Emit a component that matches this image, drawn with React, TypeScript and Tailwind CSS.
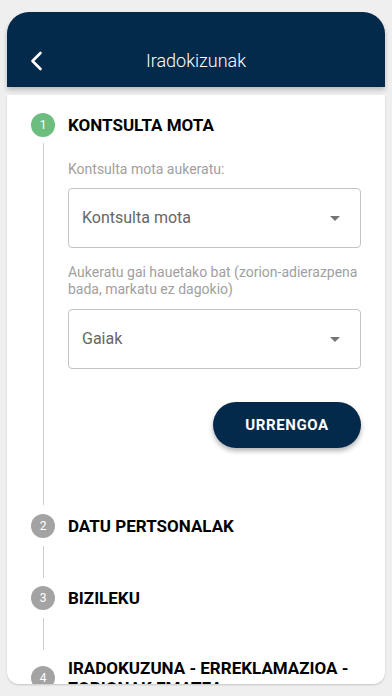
import React from "react";

const font = { fontFamily: "Roboto, 'Liberation Sans', sans-serif" };

function StepCircle({ n, active }: { n: number; active?: boolean }) {
  return (
    <div
      className={`w-6 h-6 rounded-full flex items-center justify-center text-white text-[12px] shrink-0 ${
        active ? "bg-[#6dbd7f]" : "bg-[#a3a3a3]"
      }`}
    >
      {n}
    </div>
  );
}

function SelectBox({ label }: { label: string }) {
  return (
    <div className="h-[60px] border border-[#c4c4c4] rounded-[4px] flex items-center justify-between pl-[13px] pr-[20px]">
      <span className="text-[16px] text-[#666666]">{label}</span>
      <svg width="10" height="5" viewBox="0 0 10 5">
        <path d="M0 0 L10 0 L5 5 Z" fill="#757575" />
      </svg>
    </div>
  );
}

function Connector() {
  return (
    <div className="flex py-[8px]">
      <div className="w-6 flex justify-center">
        <div className="w-px bg-[#cfcfcf] h-[32px]" />
      </div>
    </div>
  );
}

export default function App() {
  return (
    <div style={font} className="h-[696px] w-full bg-[#efefef] flex flex-col px-[7px] pt-[12px] pb-[12px]">
      {/* header */}
      <div className="h-[75px] shrink-0 bg-[#032a4a] rounded-t-[22px] flex items-center pt-[22px] px-[16px] shadow-[0_3px_5px_rgba(0,0,0,0.22)] relative z-10">
        <div className="w-[40px] flex items-center pl-[6px]">
          <svg width="14" height="20" viewBox="0 0 14 20" fill="none">
            <path d="M11.5 2 L3.5 10 L11.5 18" stroke="white" strokeWidth="2.6" strokeLinecap="round" strokeLinejoin="round" />
          </svg>
        </div>
        <div className="flex-1 text-center text-white text-[18px] font-light">Iradokizunak</div>
        <div className="w-[40px]" />
      </div>

      {/* body */}
      <div className="mt-[8px] flex-1 bg-white rounded-b-[12px] overflow-hidden shadow-[0_1px_2px_rgba(0,0,0,0.18)] pl-[24px] pr-[24px] pt-[18px]">
        {/* step 1 */}
        <div className="flex items-center gap-[13px]">
          <StepCircle n={1} active />
          <span className="text-[17px] leading-[20px] font-bold text-black">KONTSULTA MOTA</span>
        </div>
        <div className="flex">
          <div className="w-6 flex justify-center pt-[6px]">
            <div className="w-px bg-[#cfcfcf] h-full" />
          </div>
          <div className="flex-1 ml-[13px] pt-[24px] pb-[57px] flex flex-col">
            <p className="text-[14px] leading-[17px] text-[#a0a0a0]">Kontsulta mota aukeratu:</p>
            <div className="mt-[10px]">
              <SelectBox label="Kontsulta mota" />
            </div>
            <p className="mt-[16px] text-[14px] leading-[17px] text-[#a0a0a0]">
              Aukeratu gai hauetako bat (zorion-adierazpena bada, markatu ez dagokio)
            </p>
            <div className="mt-[11px]">
              <SelectBox label="Gaiak" />
            </div>
            <button className="mt-[33px] self-end w-[148px] h-[46px] rounded-full bg-[#032a4a] text-white text-[15px] font-bold tracking-[0.6px] shadow-[0_3px_5px_rgba(0,0,0,0.3)]">
              URRENGOA
            </button>
          </div>
        </div>

        {/* step 2 */}
        <div className="mt-[9px] flex items-center gap-[13px]">
          <StepCircle n={2} />
          <span className="text-[17px] leading-[20px] font-bold text-black">DATU PERTSONALAK</span>
        </div>
        <Connector />

        {/* step 3 */}
        <div className="flex items-center gap-[13px]">
          <StepCircle n={3} />
          <span className="text-[17px] leading-[20px] font-bold text-black">BIZILEKU</span>
        </div>
        <Connector />

        {/* step 4 */}
        <div className="flex items-center gap-[13px]">
          <StepCircle n={4} />
          <span className="text-[17px] leading-[20px] font-bold text-black">IRADOKUZUNA - ERREKLAMAZIOA - ZORIONAK EMATEA</span>
        </div>
      </div>
    </div>
  );
}
